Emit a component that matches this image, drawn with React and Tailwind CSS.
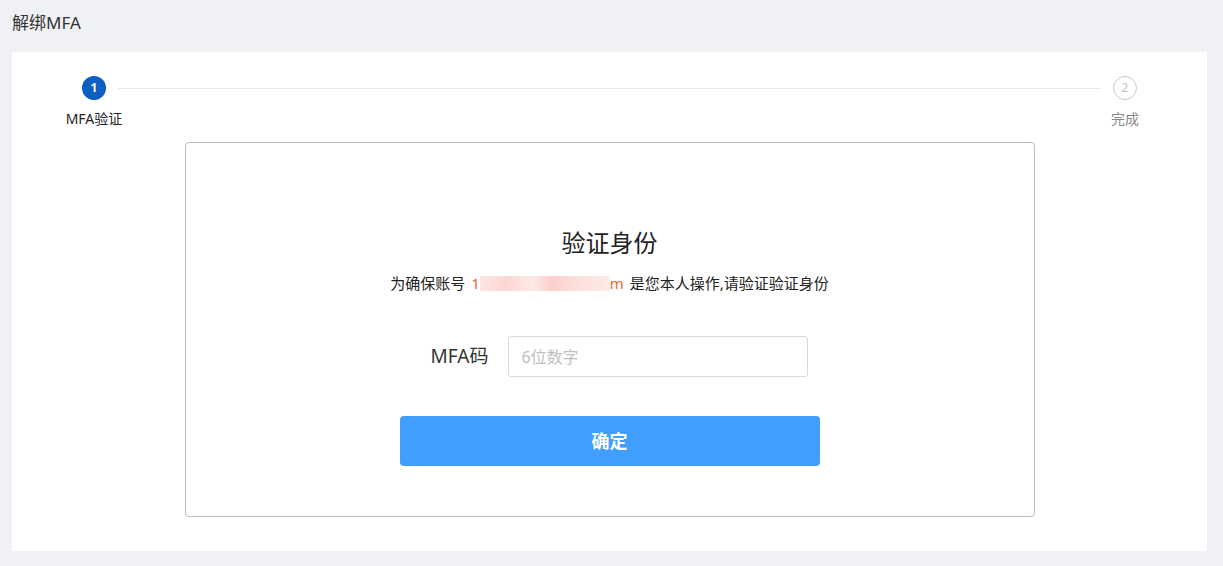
export default function App() {
  return (
    <div
      className="w-[1223px] h-[566px] bg-[#f0f1f5] flex flex-col px-3 overflow-hidden"
      style={{ fontFamily: '"Noto Sans", "Noto Sans CJK SC", sans-serif' }}
    >
      <div className="h-[52px] flex items-center text-[17px] leading-none text-[#333] pb-[8px]">解绑MFA</div>
      <div className="w-[1195px] h-[499px] bg-white flex flex-col items-center">
        <div className="w-[1195px] flex items-start pt-[24px] px-[42px]">
          <div className="w-[80px] flex flex-col items-center">
            <div className="w-6 h-6 rounded-full bg-[#0b5fc0] text-white text-[12px] font-bold flex items-center justify-center leading-none">1</div>
            <div className="mt-[12px] text-[14px] leading-none text-[#222]">MFA验证</div>
          </div>
          <div className="flex-1 h-px bg-[#e8e8e8] mt-[12px] mx-[-16px]"></div>
          <div className="w-[80px] flex flex-col items-center">
            <div className="w-6 h-6 rounded-full border border-[#c8c8c8] text-[#c0c0c0] text-[12px] flex items-center justify-center leading-none">2</div>
            <div className="mt-[12px] text-[14px] leading-none text-[#888]">完成</div>
          </div>
        </div>
        <div className="mt-[16px] w-[850px] h-[375px] border border-[#bdbdbd] rounded-[4px] flex flex-col items-center">
          <div className="mt-[88px] text-[24px] leading-none text-[#222]">验证身份</div>
          <div className="mt-[21px] text-[15px] leading-none text-[#222] flex items-center">
            <span>为确保账号</span>
            <span className="ml-[6px] text-[#f2632c]">1</span>
            <span className="inline-block w-[130px] h-[15px] bg-[linear-gradient(90deg,#fde6e3_0%,#fdd6d2_20%,#feeae7_40%,#fdd0cb_55%,#fde0dc_75%,#feebe8_100%)]"></span>
            <span className="text-[#f2632c]">m</span>
            <span className="ml-[6px]">是您本人操作,请验证验证身份</span>
          </div>
          <div className="mt-[45px] ml-[20px] flex items-center">
            <div className="text-[19px] leading-none text-[#333] mr-[20px]">MFA码</div>
            <div className="w-[300px] h-[41px] border border-[#d9d9d9] rounded-[3px] flex items-center pl-[12px] text-[16px] text-[#bfbfbf] leading-none">6位数字</div>
          </div>
          <div className="mt-[39px] w-[420px] h-[50px] rounded-[4px] bg-[#409eff] text-white text-[18px] font-bold flex items-center justify-center leading-none">确定</div>
        </div>
      </div>
    </div>
  );
}
